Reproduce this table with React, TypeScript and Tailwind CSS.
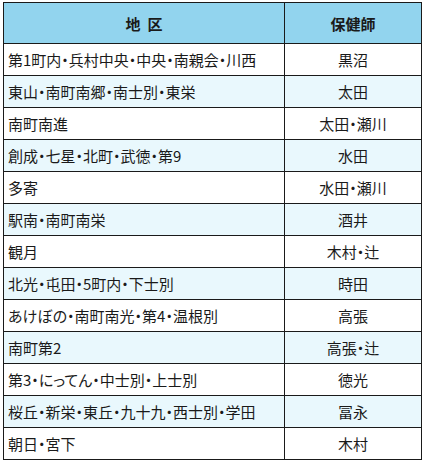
const rows: [string, string][] = [
  ["第1町内・兵村中央・中央・南親会・川西", "黒沼"],
  ["東山・南町南郷・南士別・東栄", "太田"],
  ["南町南進", "太田・瀬川"],
  ["創成・七星・北町・武徳・第9", "水田"],
  ["多寄", "水田・瀬川"],
  ["駅南・南町南栄", "酒井"],
  ["観月", "木村・辻"],
  ["北光・屯田・5町内・下士別", "時田"],
  ["あけぼの・南町南光・第4・温根別", "高張"],
  ["南町第2", "高張・辻"],
  ["第3・にってん・中士別・上士別", "徳光"],
  ["桜丘・新栄・東丘・九十九・西士別・学田", "冨永"],
  ["朝日・宮下", "木村"],
];

export default function App() {
  return (
    <div className="w-[425px] h-[462px] bg-white pt-[2px] pl-[3px] font-['Noto_Sans_CJK_JP','Noto_Sans',sans-serif] text-[15px] text-[#1a1a1a] [font-feature-settings:'palt']">
      <table className="border-collapse w-[418px] table-fixed">
        <colgroup>
          <col className="w-[281px]" />
          <col className="w-[137px]" />
        </colgroup>
        <thead>
          <tr className="h-[41px] bg-[#92d4ee]">
            <th className="border border-[#1a1a1a] font-bold text-center leading-none">地&nbsp;&nbsp;区</th>
            <th className="border border-[#1a1a1a] font-bold text-center leading-none">保健師</th>
          </tr>
        </thead>
        <tbody>
          {rows.map(([area, nurse], i) => (
            <tr key={area} className={`h-[32px] ${i % 2 === 1 ? "bg-[#e9f8fd]" : "bg-white"}`}>
              <td className="border border-[#1a1a1a] pl-[4px] leading-none whitespace-nowrap">{area}</td>
              <td className="border border-[#1a1a1a] text-center leading-none">{nurse}</td>
            </tr>
          ))}
        </tbody>
      </table>
    </div>
  );
}
